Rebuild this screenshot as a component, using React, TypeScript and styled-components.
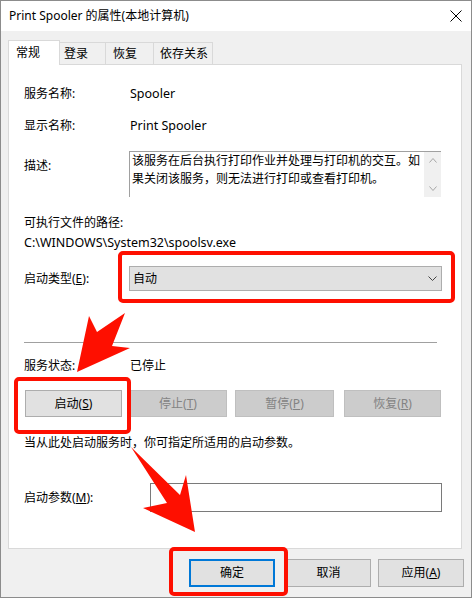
import React from "react";
import styled, { createGlobalStyle } from "styled-components";

const GlobalStyle = createGlobalStyle`
  html, body { margin: 0; padding: 0; background: #f0f0f0; }
  body {
    font-family: "Noto Sans", "Noto Sans CJK SC", sans-serif;
    font-size: 12px;
    color: #000;
  }
  * { box-sizing: border-box; }
`;

const Window = styled.div`
  position: relative;
  width: 472px;
  height: 598px;
  border: 1px solid #8c8c8c;
  background: #f0f0f0;
  display: flex;
  flex-direction: column;
  overflow: hidden;
`;

const TitleBar = styled.div`
  flex: none;
  height: 30px;
  background: #fff;
  display: flex;
  align-items: center;
  justify-content: space-between;
  padding: 0 9px 0 8px;
`;

const TitleText = styled.span`
  line-height: 16px;
`;

const CloseIcon = styled.svg`
  display: block;
  margin-top: -1px;
`;

const Body = styled.div`
  flex: 1;
  display: flex;
  flex-direction: column;
  padding: 9px 0 0 7px;
`;

const TabStrip = styled.div`
  display: flex;
  align-items: flex-end;
  height: 25px;
  margin-bottom: -1px;
  position: relative;
  z-index: 1;
`;

const Tab = styled.div<{ $active?: boolean; $w: number; $pl: number }>`
  width: ${(p) => p.$w}px;
  height: ${(p) => (p.$active ? 25 : 22)}px;
  margin-bottom: ${(p) => (p.$active ? 0 : 1)}px;
  padding-left: ${(p) => p.$pl}px;
  display: flex;
  align-items: center;
  line-height: 16px;
  background: ${(p) => (p.$active ? "#fff" : "#f0f0f0")};
  border: 1px solid #d9d9d9;
  border-bottom: none;
  border-left-width: ${(p) => (p.$active ? 1 : 0)}px;
  white-space: nowrap;
`;

const Panel = styled.div`
  width: 454px;
  height: 485px;
  background: #fff;
  border: 1px solid #d9d9d9;
  padding-left: 15px;
  display: flex;
  flex-direction: column;
`;

const Row = styled.div<{ $mt: number; $h?: number; $top?: boolean }>`
  flex: none;
  display: flex;
  align-items: ${(p) => (p.$top ? "flex-start" : "center")};
  margin-top: ${(p) => p.$mt}px;
  height: ${(p) => (p.$h ? `${p.$h}px` : "auto")};
  line-height: 16px;
  white-space: nowrap;
`;

const Label = styled.div<{ $w?: number; $mt?: number }>`
  flex: none;
  width: ${(p) => p.$w ?? 105}px;
  margin-top: ${(p) => p.$mt ?? 0}px;
`;

const Value = styled.div`
  padding-left: 1px;
`;

const Latin = styled.span`
  font-size: 12.5px;
`;

const Line = styled.div<{ $mt: number }>`
  flex: none;
  margin-top: ${(p) => p.$mt}px;
  line-height: 16px;
  white-space: nowrap;
`;

const DescBox = styled.div`
  width: 312px;
  height: 46px;
  border-top: 1px solid #a0a0a0;
  border-left: 1px solid #a0a0a0;
  display: flex;
`;

const DescText = styled.div`
  flex: 1;
  padding-left: 2px;
  line-height: 18px;
  white-space: normal;
  overflow: hidden;
`;

const ScrollBar = styled.div`
  width: 17px;
  flex: none;
  background: #f0f0f0;
  display: flex;
  flex-direction: column;
  justify-content: space-between;
  align-items: center;
  padding: 6px 0 6px;
`;

const Combo = styled.div`
  width: 313px;
  height: 25px;
  border: 1px solid #adadad;
  background: #e1e1e1;
  display: flex;
  align-items: center;
  justify-content: space-between;
  padding: 0 4px 0 3px;
`;

const Divider = styled.div<{ $mt: number }>`
  flex: none;
  margin-top: ${(p) => p.$mt}px;
  width: 413px;
  height: 1px;
  background: #a0a0a0;
`;

const ActionButton = styled.div<{ $w: number; $ml: number; $off?: boolean }>`
  width: ${(p) => p.$w}px;
  height: 27px;
  margin-left: ${(p) => p.$ml}px;
  border: 1px solid ${(p) => (p.$off ? "#bfbfbf" : "#adadad")};
  background: ${(p) => (p.$off ? "#cccccc" : "#e1e1e1")};
  color: ${(p) => (p.$off ? "#838383" : "#000")};
  display: flex;
  align-items: center;
  justify-content: center;
`;

const ParamInput = styled.div`
  width: 292px;
  height: 29px;
  border: 1px solid #7a7a7a;
  background: #fff;
`;

const Footer = styled.div`
  display: flex;
  justify-content: flex-end;
  padding: 10px 7px 0 0;
`;

const DialogButton = styled.div<{ $w: number; $ml: number; $default?: boolean }>`
  width: ${(p) => p.$w}px;
  height: 28px;
  margin-left: ${(p) => p.$ml}px;
  border: ${(p) => (p.$default ? "2px solid #0078d7" : "1px solid #adadad")};
  background: #e1e1e1;
  display: flex;
  align-items: center;
  justify-content: center;
  line-height: 16px;
`;

const Overlay = styled.svg`
  position: absolute;
  left: -1px;
  top: -1px;
  pointer-events: none;
  z-index: 5;
`;

const Chevron = ({ up, color, w, h }: { up?: boolean; color: string; w: number; h: number }) => (
  <svg width={w} height={h} viewBox={`0 0 ${w} ${h}`} style={{ display: "block" }}>
    <polyline
      points={
        up
          ? `0.5,${h - 0.5} ${w / 2},0.5 ${w - 0.5},${h - 0.5}`
          : `0.5,0.5 ${w / 2},${h - 0.5} ${w - 0.5},0.5`
      }
      fill="none"
      stroke={color}
      strokeWidth={1}
    />
  </svg>
);

export default function App() {
  return (
    <>
      <GlobalStyle />
      <Window>
        <TitleBar>
          <TitleText>Print Spooler 的属性(本地计算机)</TitleText>
          <CloseIcon width="12" height="12" viewBox="0 0 12 12">
            <path d="M0.5 0.5 L11.5 11.5 M11.5 0.5 L0.5 11.5" stroke="#000" strokeWidth="1" />
          </CloseIcon>
        </TitleBar>
        <Body>
          <TabStrip>
            <Tab $active $w={52} $pl={7}>常规</Tab>
            <Tab $w={46} $pl={4}>登录</Tab>
            <Tab $w={48} $pl={7}>恢复</Tab>
            <Tab $w={59} $pl={6}>依存关系</Tab>
          </TabStrip>
          <Panel>
            <Row $mt={21}>
              <Label>服务名称:</Label>
              <Value>
                <Latin>Spooler</Latin>
              </Value>
            </Row>
            <Row $mt={16}>
              <Label>显示名称:</Label>
              <Value>
                <Latin>Print Spooler</Latin>
              </Value>
            </Row>
            <Row $mt={17} $top>
              <Label $mt={7}>描述:</Label>
              <DescBox>
                <DescText>
                  该服务在后台执行打印作业并处理与打印机的交互。如果关闭该服务，则无法进行打印或查看打印机。
                </DescText>
                <ScrollBar>
                  <Chevron up color="#a6a6a6" w={8} h={5} />
                  <Chevron color="#a6a6a6" w={8} h={5} />
                </ScrollBar>
              </DescBox>
            </Row>
            <Line $mt={18}>可执行文件的路径:</Line>
            <Line $mt={4}>
              <Latin>C:\WINDOWS\System32\spoolsv.exe</Latin>
            </Line>
            <Row $mt={15} $h={25}>
              <Label>
                启动类型(<u>E</u>):
              </Label>
              <Combo>
                <span>自动</span>
                <Chevron color="#444" w={9} h={5} />
              </Combo>
            </Row>
            <Divider $mt={51} />
            <Row $mt={15}>
              <Label>服务状态:</Label>
              <Value>已停止</Value>
            </Row>
            <Row $mt={16} $h={27}>
              <ActionButton $w={97} $ml={1}>
                启动(<u>S</u>)
              </ActionButton>
              <ActionButton $w={98} $ml={7} $off>
                停止(<u>T</u>)
              </ActionButton>
              <ActionButton $w={99} $ml={8} $off>
                暂停(<u>P</u>)
              </ActionButton>
              <ActionButton $w={97} $ml={10} $off>
                恢复(<u>R</u>)
              </ActionButton>
            </Row>
            <Line $mt={18}>当从此处启动服务时，你可指定所适用的启动参数。</Line>
            <Row $mt={32} $h={29}>
              <Label $w={126}>
                启动参数(<u>M</u>):
              </Label>
              <ParamInput />
            </Row>
          </Panel>
          <Footer>
            <DialogButton $w={86} $ml={0} $default>
              确定
            </DialogButton>
            <DialogButton $w={85} $ml={11}>
              取消
            </DialogButton>
            <DialogButton $w={86} $ml={7}>
              应用(<u>A</u>)
            </DialogButton>
          </Footer>
        </Body>
        <Overlay width="472" height="598" viewBox="0 0 472 598">
          <g fill="none" stroke="#fe0f00" strokeWidth="4">
            <rect x="120" y="253" width="333" height="48" rx="3" />
            <rect x="16" y="379" width="113" height="53" rx="3" />
            <rect x="171" y="549" width="115" height="45" rx="3" />
          </g>
          <g fill="#fe0f00">
            <polygon points="77,372 89,316 97,332 125,313 112,346 130,348" />
            <polygon points="131,447 180,495 186,475 195,532 143,508 167,503" />
          </g>
        </Overlay>
      </Window>
    </>
  );
}
